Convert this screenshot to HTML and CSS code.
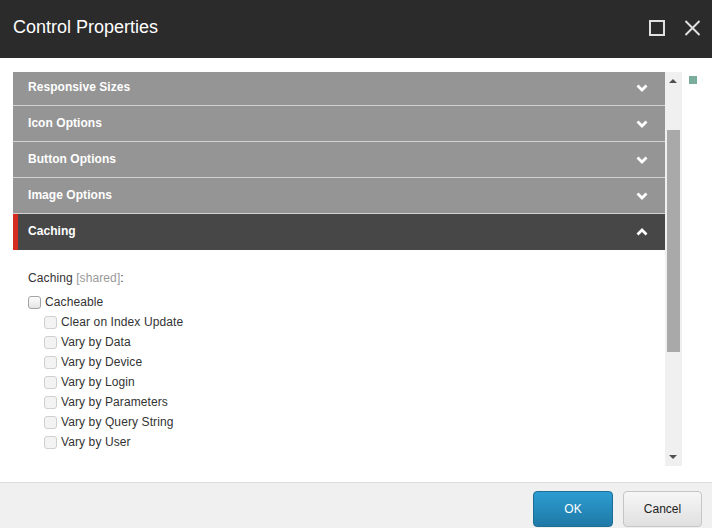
FILE: index.html
```html
<!DOCTYPE html>
<html>
<head>
<meta charset="utf-8">
<link rel="stylesheet" href="styles.css">
</head>
<body>
<div class="dialog">
  <header class="titlebar">
    <h1 class="title">Control Properties</h1>
    <div class="win-btns">
      <svg class="win-icon" width="16" height="16" viewBox="0 0 16 16"><rect x="1" y="1" width="14" height="14" fill="none" stroke="#e0e0e0" stroke-width="2"/></svg>
      <svg class="win-icon" width="17" height="16" viewBox="0 0 17 16"><path d="M1.5 1 L15.5 15 M15.5 1 L1.5 15" stroke="#e0e0e0" stroke-width="2" fill="none"/></svg>
    </div>
  </header>
  <main class="body">
    <div class="scrollpane">
      <div class="viewport">
        <div class="content">
          <div class="acc-row"><span class="acc-label">Responsive Sizes</span><svg class="chev" width="12" height="8" viewBox="0 0 12 8"><polyline points="1.5,1.5 6,6 10.5,1.5" fill="none" stroke="#fff" stroke-width="2.8"/></svg></div>
          <div class="acc-row"><span class="acc-label">Icon Options</span><svg class="chev" width="12" height="8" viewBox="0 0 12 8"><polyline points="1.5,1.5 6,6 10.5,1.5" fill="none" stroke="#fff" stroke-width="2.8"/></svg></div>
          <div class="acc-row"><span class="acc-label">Button Options</span><svg class="chev" width="12" height="8" viewBox="0 0 12 8"><polyline points="1.5,1.5 6,6 10.5,1.5" fill="none" stroke="#fff" stroke-width="2.8"/></svg></div>
          <div class="acc-row"><span class="acc-label">Image Options</span><svg class="chev" width="12" height="8" viewBox="0 0 12 8"><polyline points="1.5,1.5 6,6 10.5,1.5" fill="none" stroke="#fff" stroke-width="2.8"/></svg></div>
          <div class="acc-row active"><span class="acc-label">Caching</span><svg class="chev" width="12" height="8" viewBox="0 0 12 8"><polyline points="1.5,6.5 6,2 10.5,6.5" fill="none" stroke="#fff" stroke-width="2.8"/></svg></div>
          <div class="panel">
            <div class="field-label">Caching <span class="shared">[shared]</span>:</div>
            <label class="check"><span class="box"></span>Cacheable</label>
            <div class="sub">
              <label class="check"><span class="box dis"></span>Clear on Index Update</label>
              <label class="check"><span class="box dis"></span>Vary by Data</label>
              <label class="check"><span class="box dis"></span>Vary by Device</label>
              <label class="check"><span class="box dis"></span>Vary by Login</label>
              <label class="check"><span class="box dis"></span>Vary by Parameters</label>
              <label class="check"><span class="box dis"></span>Vary by Query String</label>
              <label class="check"><span class="box dis"></span>Vary by User</label>
            </div>
          </div>
        </div>
      </div>
      <div class="scrollbar">
        <div class="arrow up"></div>
        <div class="track"><div class="thumb"></div></div>
        <div class="arrow down"></div>
      </div>
    </div>
    <span class="marker"></span>
  </main>
  <footer class="footer">
    <button class="btn ok">OK</button>
    <button class="btn cancel">Cancel</button>
  </footer>
</div>
</body>
</html>
```
FILE: styles.css
```css
* { box-sizing: border-box; }
html, body { margin: 0; padding: 0; }
body {
  width: 712px;
  height: 528px;
  overflow: hidden;
  font-family: "Liberation Sans", Arial, sans-serif;
  background: #fff;
}
.dialog { display: flex; flex-direction: column; height: 528px; }

.titlebar {
  height: 58px;
  background: #2b2b2b;
  display: flex;
  align-items: center;
  justify-content: space-between;
  padding: 0 11px 0 13px;
  flex: none;
}
.title {
  margin: 0;
  font-size: 18px;
  font-weight: normal;
  color: #fff;
  position: relative;
  top: -2px;
}
.win-btns { display: flex; gap: 19px; align-items: center; position: relative; top: -1px; }
.win-icon { display: block; }

.body {
  flex: none;
  height: 424px;
  display: flex;
  align-items: flex-start;
  padding: 14px 0 0 13px;
}
.scrollpane {
  width: 669px;
  height: 394px;
  display: flex;
}
.viewport {
  width: 652px;
  height: 394px;
  overflow: hidden;
}
.content { margin-top: -2px; }

.acc-row {
  height: 36px;
  background: #959595;
  border-bottom: 1px solid #d2d2d2;
  display: flex;
  align-items: center;
  justify-content: space-between;
  padding: 0 17px 0 15px;
  color: #fff;
  font-weight: bold;
  font-size: 12px;
}
.acc-label { position: relative; top: -1px; letter-spacing: 0.05px; }
.acc-row.active {
  background: #474747;
  border-bottom: none;
  border-left: 5px solid #d42a20;
  padding-left: 10px;
}
.chev { display: block; }

.panel {
  padding: 18px 0 0 15px;
  font-size: 12px;
  color: #333;
  letter-spacing: 0.1px;
}
.field-label { line-height: 20px; margin-bottom: 4px; }
.shared { color: #9a9a9a; }
.check {
  display: flex;
  align-items: center;
  height: 20px;
  color: #333;
}
.sub { padding-left: 16px; }
.box {
  width: 13px;
  height: 13px;
  border: 1px solid #a3a3a3;
  border-radius: 3px;
  background: linear-gradient(#fdfdfd, #e4e4e4);
  margin-right: 4px;
  flex: none;
}
.box.dis {
  border-color: #d0d0d0;
  background: #f3f3f3;
}

.scrollbar {
  width: 17px;
  height: 394px;
  background: #f0f0f0;
  display: flex;
  flex-direction: column;
  align-items: center;
}
.arrow { width: 17px; height: 17px; flex: none; position: relative; }
.arrow.up::after, .arrow.down::after {
  content: "";
  position: absolute;
  left: 4px;
  border-left: 4px solid transparent;
  border-right: 4px solid transparent;
}
.arrow.up::after { top: 7px; border-bottom: 4px solid #505050; }
.arrow.down::after { top: 6px; border-top: 4px solid #505050; }
.track { flex: 1; width: 17px; padding: 41px 2px 0 2px; }
.thumb { width: 13px; height: 222px; background: #a9a9a9; }

.marker {
  width: 8px;
  height: 8px;
  background: #7aad9b;
  margin: 4px 0 0 7px;
  flex: none;
}

.footer {
  flex: none;
  height: 46px;
  background: #f0f0f0;
  border-top: 1px solid #dcdcdc;
  display: flex;
  justify-content: flex-end;
  align-items: flex-start;
  gap: 10px;
  padding: 8px 10px 0 0;
}
.btn {
  height: 36px;
  border-radius: 4px;
  font-family: "Liberation Sans", Arial, sans-serif;
  font-size: 12px;
  cursor: pointer;
}
.btn.ok {
  width: 80px;
  color: #fff;
  background: linear-gradient(#2c9dd2, #1f79a6);
  border: 1px solid #1e6f98;
}
.btn.cancel {
  width: 79px;
  color: #222;
  background: linear-gradient(#f6f6f6, #e0e0e0);
  border: 1px solid #c6c6c6;
}
```
